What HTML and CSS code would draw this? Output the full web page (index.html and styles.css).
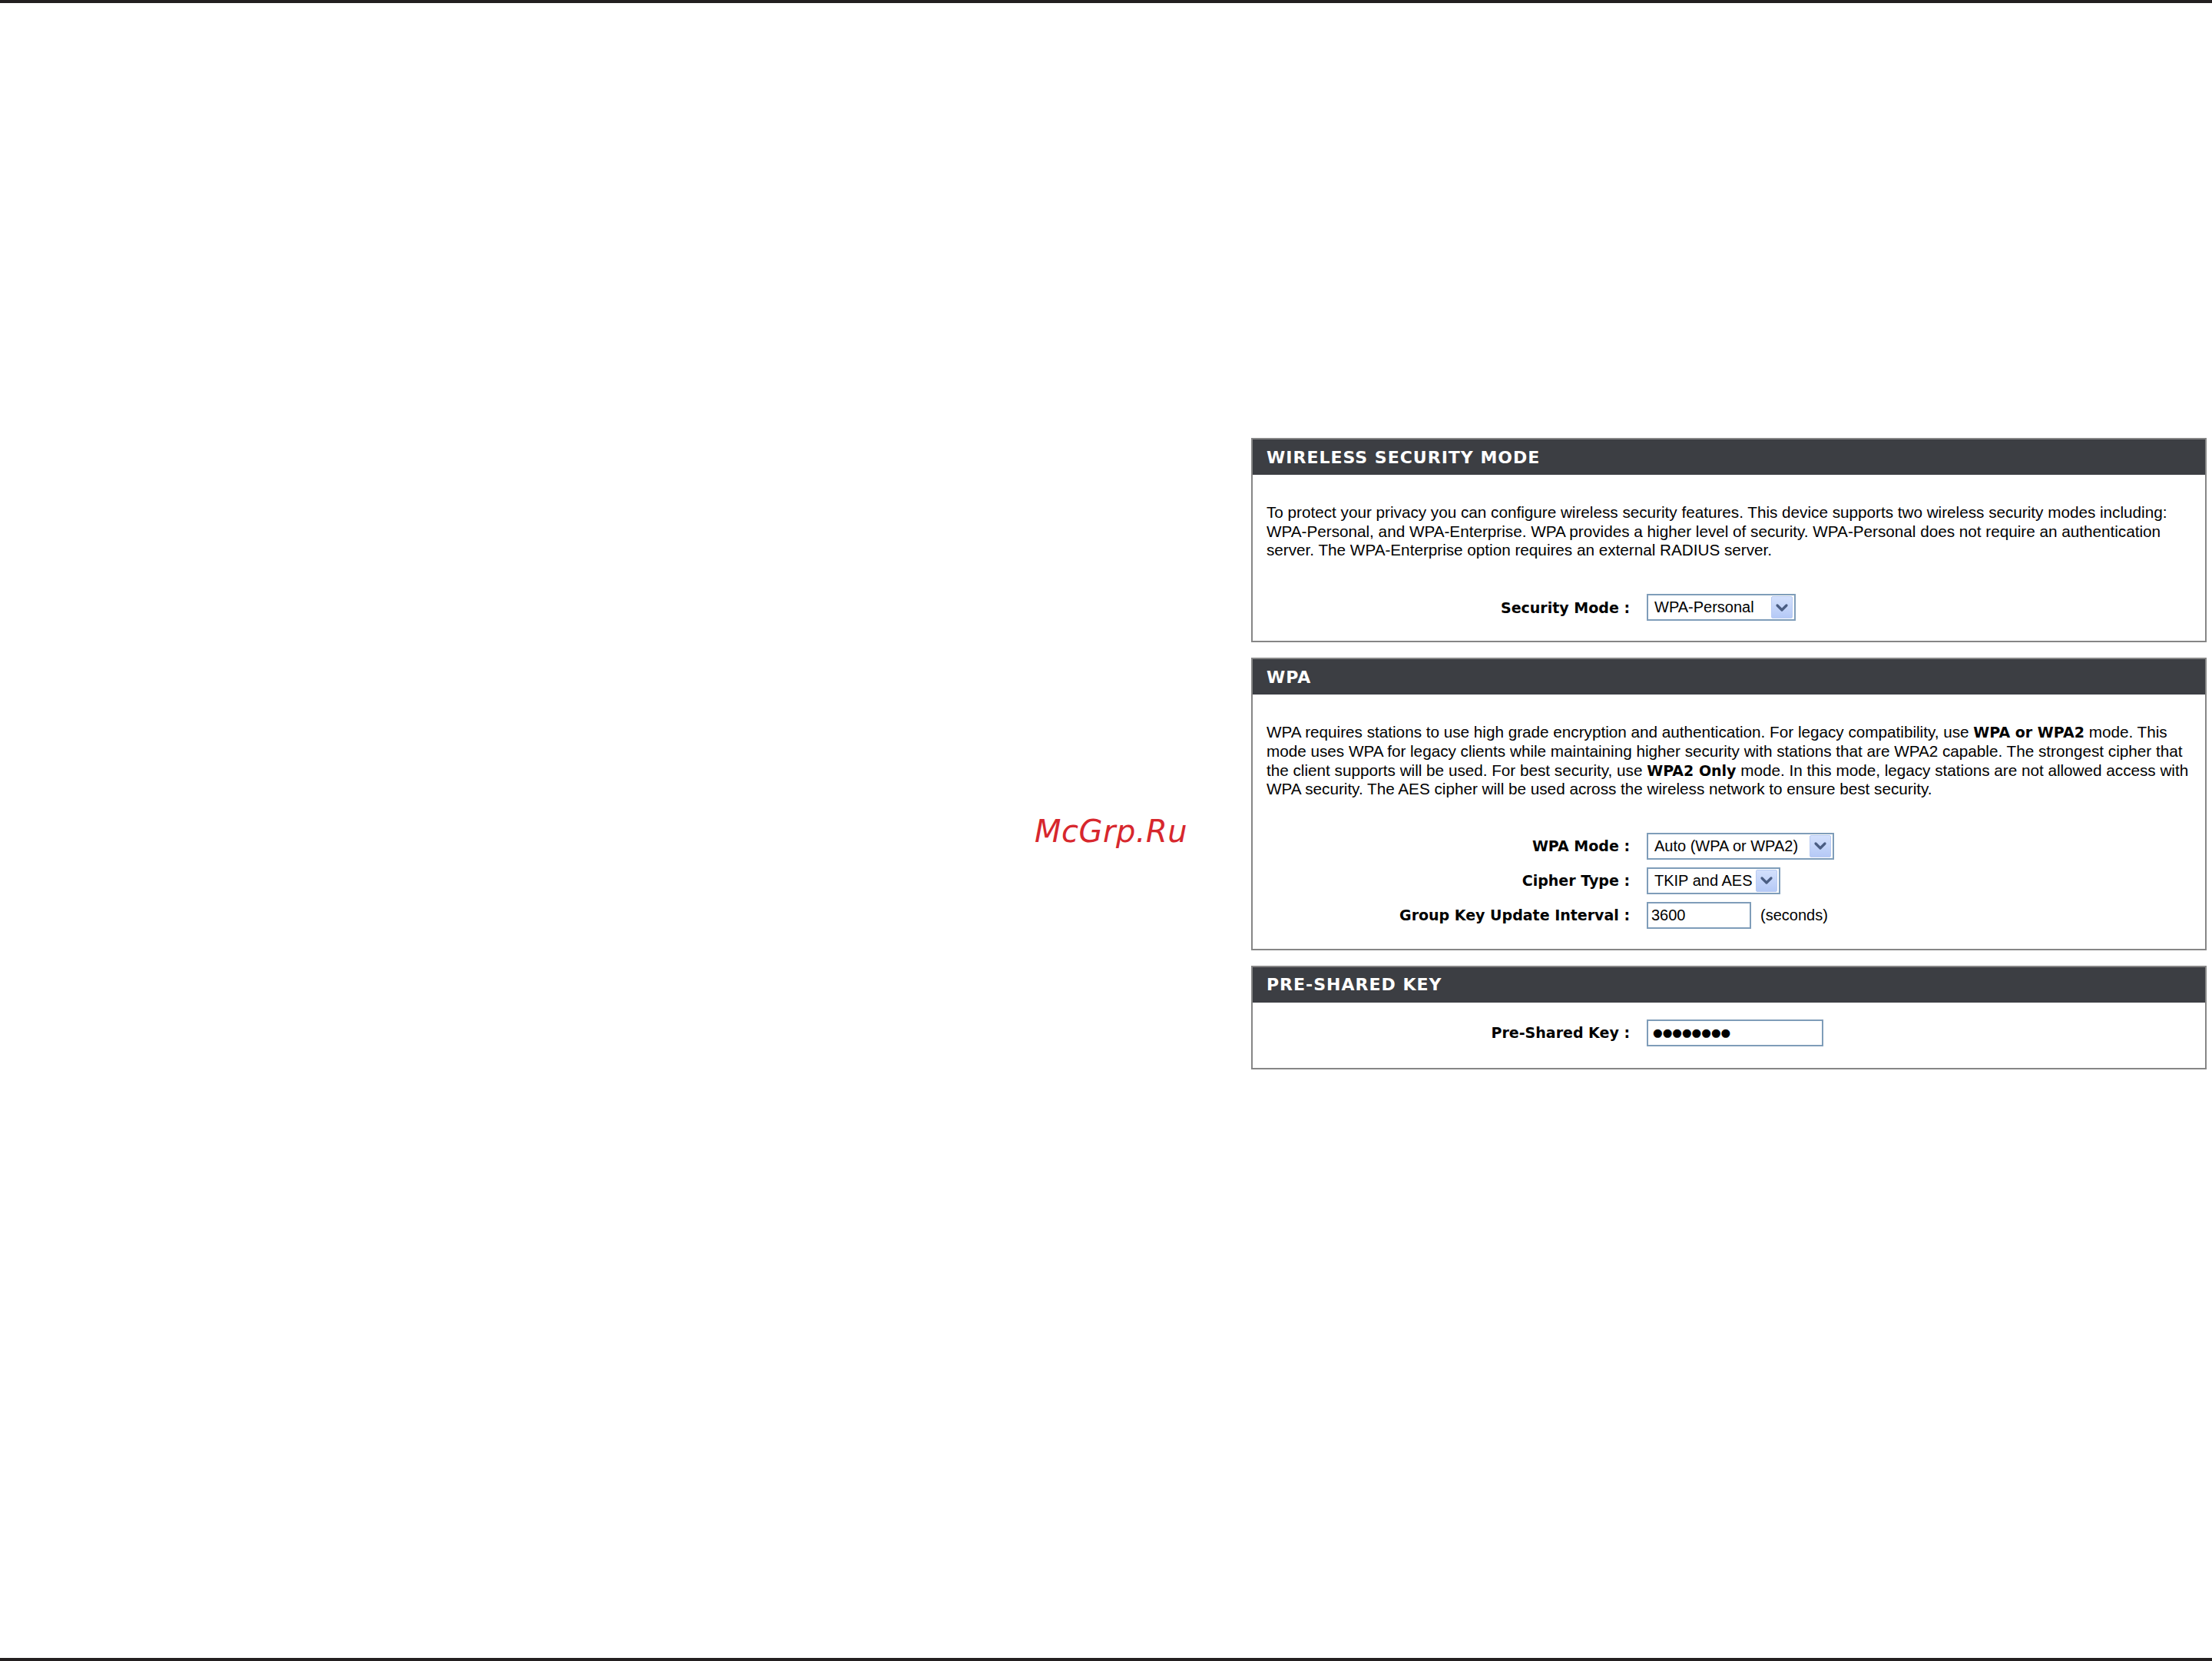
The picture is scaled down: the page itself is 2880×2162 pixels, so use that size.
FILE: index.html
```html
<!DOCTYPE html>
<html lang="en">
<head>
<meta charset="utf-8">
<title>Wireless Security</title>
<link rel="stylesheet" href="styles.css">
</head>
<body>
<div class="page">
  <div class="rule"></div>
  <main class="content">
    <div class="stamp">McGrp.Ru</div>
    <div class="panels">
      <section class="panel">
        <h2 class="panel-head">WIRELESS SECURITY MODE</h2>
        <div class="panel-body">
          <p class="intro">To protect your privacy you can configure wireless security features. This device supports two wireless security modes including:<br>WPA-Personal, and WPA-Enterprise. WPA provides a higher level of security. WPA-Personal does not require an authentication<br>server. The WPA-Enterprise option requires an external RADIUS server.</p>
          <div class="rows">
            <div class="row">
              <span class="label">Security Mode :</span>
              <div class="select select-mode">
                <span class="select-value">WPA-Personal</span>
                <span class="select-btn"><svg viewBox="0 0 26 28" width="26" height="28"><path d="M7 11 L13 17 L19 11" fill="none" stroke="#4a5d82" stroke-width="3.2" stroke-linecap="round" stroke-linejoin="round"/></svg></span>
              </div>
            </div>
          </div>
        </div>
      </section>

      <section class="panel">
        <h2 class="panel-head">WPA</h2>
        <div class="panel-body">
          <p class="intro">WPA requires stations to use high grade encryption and authentication. For legacy compatibility, use <b>WPA or WPA2</b> mode. This<br>mode uses WPA for legacy clients while maintaining higher security with stations that are WPA2 capable. The strongest cipher that<br>the client supports will be used. For best security, use <b>WPA2 Only</b> mode. In this mode, legacy stations are not allowed access with<br>WPA security. The AES cipher will be used across the wireless network to ensure best security.</p>
          <div class="rows">
            <div class="row">
              <span class="label">WPA Mode :</span>
              <div class="select select-wpa">
                <span class="select-value">Auto (WPA or WPA2)</span>
                <span class="select-btn"><svg viewBox="0 0 26 28" width="26" height="28"><path d="M7 11 L13 17 L19 11" fill="none" stroke="#4a5d82" stroke-width="3.2" stroke-linecap="round" stroke-linejoin="round"/></svg></span>
              </div>
            </div>
            <div class="row">
              <span class="label">Cipher Type :</span>
              <div class="select select-cipher">
                <span class="select-value">TKIP and AES</span>
                <span class="select-btn"><svg viewBox="0 0 26 28" width="26" height="28"><path d="M7 11 L13 17 L19 11" fill="none" stroke="#4a5d82" stroke-width="3.2" stroke-linecap="round" stroke-linejoin="round"/></svg></span>
              </div>
            </div>
            <div class="row">
              <span class="label">Group Key Update Interval :</span>
              <div class="field field-interval">3600</div>
              <span class="unit">(seconds)</span>
            </div>
          </div>
        </div>
      </section>

      <section class="panel">
        <h2 class="panel-head">PRE-SHARED KEY</h2>
        <div class="panel-body panel-body-tight">
          <div class="rows">
            <div class="row">
              <span class="label">Pre-Shared Key :</span>
              <div class="field field-key"><span class="dots">●●●●●●●●</span></div>
            </div>
          </div>
        </div>
      </section>
    </div>
  </main>
  <div class="rule"></div>
</div>
</body>
</html>
```

FILE: styles.css
```css
html, body {
  margin: 0;
  padding: 0;
  background: #ffffff;
}

body {
  font-family: "Liberation Sans", Arial, sans-serif;
  color: #000000;
}

.page {
  display: flex;
  flex-direction: column;
  min-height: 2162px;
}

.rule {
  height: 4px;
  background: #231f20;
}

.content {
  flex: 1;
  position: relative;
  padding: 566px 0 0 1629px;
}

/* red site stamp floating over the blank left area */
.stamp {
  position: absolute;
  left: 1347px;
  top: 1054px;
  font-family: "DejaVu Sans", sans-serif;
  font-style: oblique;
  font-size: 40px;
  line-height: 48px;
  color: #d7272d;
  letter-spacing: 0.5px;
}

.panels {
  width: 1244px;
  display: flex;
  flex-direction: column;
  gap: 20px;
}

.panel {
  border: 2px solid #868686;
  background: #ffffff;
}

.panel-head {
  margin: 0;
  height: 46px;
  padding-left: 18px;
  display: flex;
  align-items: center;
  background: #3c3e43;
  color: #ffffff;
  font-family: "DejaVu Sans", sans-serif;
  font-weight: bold;
  font-size: 22px;
  letter-spacing: 1px;
}

.panel-body {
  padding: 37px 18px 26px 18px;
}

.panel-body-tight {
  padding-top: 22px;
  padding-bottom: 28px;
}

.intro {
  margin: 0 0 44px 0;
  font-size: 20.7px;
  line-height: 24.7px;
  white-space: nowrap;
}

.intro b {
  font-family: "DejaVu Sans", sans-serif;
  font-weight: bold;
  font-size: 19px;
}

.rows {
  display: flex;
  flex-direction: column;
  gap: 10px;
}

.row {
  display: flex;
  align-items: center;
  gap: 22px;
  height: 35px;
  font-size: 20px;
}

.label {
  width: 473px;
  flex: none;
  text-align: right;
  font-family: "DejaVu Sans", sans-serif;
  font-weight: bold;
  font-size: 19px;
}

.select,
.field {
  box-sizing: border-box;
  height: 35px;
  border: 2px solid #7f9db9;
  background: #ffffff;
  display: flex;
  align-items: center;
}

.select {
  justify-content: space-between;
  padding: 0 2px 0 8px;
}

.select-mode { width: 194px; }
.select-wpa { width: 244px; }
.select-cipher { width: 174px; }

.select-btn {
  box-sizing: border-box;
  width: 28px;
  height: 29px;
  border: 1px solid #b9cbf3;
  border-radius: 2px;
  background: linear-gradient(#d3e0fc, #b5c9f6);
  display: flex;
  align-items: center;
  justify-content: center;
}

.select-btn svg {
  display: block;
}

.field {
  padding: 0 4px;
}

.field-interval {
  width: 136px;
  margin-right: -10px;
}

.field-key {
  width: 230px;
  padding-left: 6px;
}

.dots {
  font-family: "DejaVu Sans", sans-serif;
  font-size: 14.5px;
  letter-spacing: 0;
}

.unit {
  font-size: 20px;
}
```
